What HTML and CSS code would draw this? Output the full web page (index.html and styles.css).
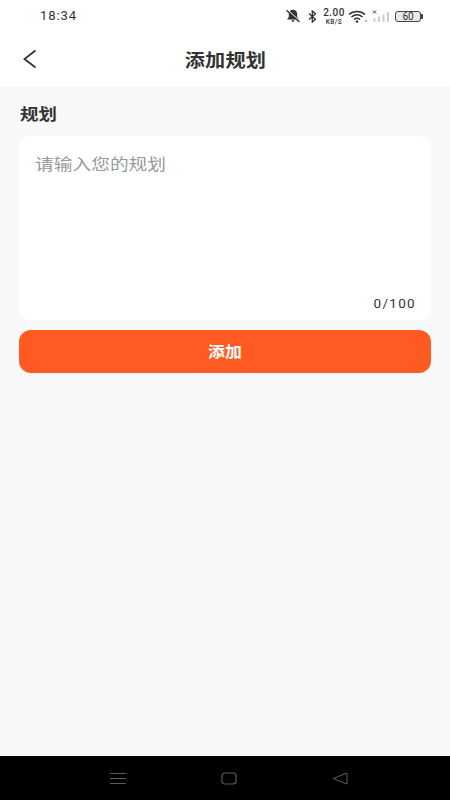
FILE: index.html
```html
<!DOCTYPE html>
<html lang="zh">
<head>
<meta charset="utf-8">
<title>添加规划</title>
<link rel="stylesheet" href="styles.css">
</head>
<body>
<div class="screen">
  <header class="top">
    <div class="status">
      <span class="time">18:34</span>
      <div class="status-icons">
        <svg class="i-bell" width="16" height="14" viewBox="0 0 16 14"><path d="M8 .8c-2.700 0-4.200 1.900-4.200 4.200v3L2 10.500h12L12.200 8V5C12.200 2.700 10.700 .8 8 .8z" fill="#333"/><path d="M6.200 11.200h3.600L8 13.200z" fill="#333"/><path d="M2.800 1.200L14.800 12.200" stroke="#fff" stroke-width="1.200"/><path d="M1.500 1.200L14.500 13" stroke="#333" stroke-width="1.500"/></svg>
        <svg class="i-bt" width="9" height="13" viewBox="0 0 9 13"><path d="M1 3.500L7.500 9.200L4.300 12V1L7.500 3.800L1 9.500" fill="none" stroke="#333" stroke-width="1.300"/></svg>
        <div class="speed"><span>2.00</span><span class="unit">KB/S</span></div>
        <svg class="i-wifi" width="20" height="13" viewBox="0 0 20 13"><path d="M1 4.500C5.500 .5 12.500 .5 17 4.500M3.500 7C6.800 4.200 11.200 4.200 14.500 7M6 9.500C7.800 8 10.200 8 12 9.500" fill="none" stroke="#333" stroke-width="1.600"/><circle cx="9" cy="11.500" r="1.300" fill="#333"/><circle cx="17.800" cy="11" r="1" fill="#999"/></svg>
        <svg class="i-signal" width="17" height="14" viewBox="0 0 17 14"><path d="M1 1.500L4 4.500M4 1.500L1 4.500" stroke="#444" stroke-width="1"/><rect x="1.500" y="9.500" width="2" height="3.500" fill="#ccc"/><rect x="6" y="7.500" width="2" height="5.500" fill="#ccc"/><rect x="10.500" y="5.500" width="2" height="7.500" fill="#ccc"/><rect x="15" y="3" width="2" height="10" fill="#ccc"/></svg>
        <div class="battery"><div class="batt-body">60</div><div class="batt-tip"></div></div>
      </div>
    </div>
    <div class="nav">
      <svg class="back" width="16" height="20" viewBox="0 0 16 20"><path d="M13.500 1.500L2.500 10L13.500 18.500" fill="none" stroke="#333" stroke-width="1.800"/></svg>
      <h1 class="title">添加规划</h1>
    </div>
  </header>
  <main class="content">
    <h2 class="label">规划</h2>
    <div class="card">
      <p class="placeholder">请输入您的规划</p>
      <p class="count">0/100</p>
    </div>
    <button class="submit" type="button"><span class="submit-text">添加</span></button>
  </main>
  <footer class="sysnav">
    <svg width="16" height="13" viewBox="0 0 16 13"><path d="M0 1.500H16M0 6.500H16M0 11.500H16" stroke="#5c5c5c" stroke-width="1"/></svg>
    <svg width="16" height="13" viewBox="0 0 16 13"><rect x="1" y="1" width="14" height="11" rx="3" fill="none" stroke="#5c5c5c" stroke-width="1.200"/></svg>
    <svg width="16" height="13" viewBox="0 0 16 13"><path d="M15 1V12L1 6.500Z" fill="none" stroke="#5c5c5c" stroke-width="1"/></svg>
  </footer>
</div>
</body>
</html>
```
FILE: styles.css
```css
* { box-sizing: border-box; }
html, body { margin: 0; padding: 0; }
body { font-family: "Noto Sans CJK SC", "Noto Sans", sans-serif; }
.screen { width: 450px; height: 800px; display: flex; flex-direction: column; background: #f8f8f8; overflow: hidden; }
.top { background: #fff; height: 87px; flex: none; }
.status { height: 32px; display: flex; align-items: center; justify-content: space-between; padding: 0 27px 0 40px; }
.time { font: 13px/16px Roboto, sans-serif; color: #333; letter-spacing: .9px; }
.status-icons { display: flex; align-items: center; }
.i-bell { margin-right: 7px; }
.i-bt { margin-right: 6px; }
.speed { display: flex; flex-direction: column; align-items: center; width: 22px; margin-right: 3px; color: #333; font: 500 10px/11px Roboto, sans-serif; letter-spacing: .4px; }
.speed .unit { font: 500 6.500px/8px Roboto, sans-serif; letter-spacing: .4px; }
.i-wifi { margin-right: 4px; }
.i-signal { margin-right: 6px; }
.battery { display: flex; align-items: center; }
.batt-body { width: 26px; height: 11px; border: 1px solid #444; border-radius: 3px; background: #e8e8e8; font: 10px/9px Roboto, sans-serif; color: #333; text-align: center; }
.batt-tip { width: 2px; height: 5px; background: #444; border-radius: 0 1px 1px 0; }
.nav { height: 55px; position: relative; display: flex; align-items: center; justify-content: center; }
.back { position: absolute; left: 22px; top: 17px; }
.title { margin: 0; font-size: 18px; line-height: 24px; font-weight: 700; color: #333; letter-spacing: .2px; transform: translateY(-1px) scaleX(1.120); }
.content { flex: 1; padding: 0 19px; }
.label { margin: 16px 0 12px 1px; font-size: 16px; line-height: 21px; font-weight: 700; color: #333; transform: scaleX(1.150); transform-origin: left center; }
.card { height: 184px; background: #fff; border-radius: 12px; padding: 16px 15px 0 16px; display: flex; flex-direction: column; justify-content: space-between; }
.placeholder { margin: 0; font-size: 16px; line-height: 23px; color: #999; transform: scaleX(1.170); transform-origin: left center; }
.count { margin: 0 0 8px; text-align: right; font: 13.500px/17px Roboto, sans-serif; color: #333; letter-spacing: 1.300px; }
.submit { display: block; width: 100%; height: 43px; margin-top: 10px; padding: 0 0 2px; border: 0; border-radius: 12px; background: #ff5a22; color: #fff; font: 700 15px/20px "Noto Sans CJK SC", sans-serif; }
.submit-text { display: inline-block; transform: scaleX(1.130); }
.sysnav { height: 44px; flex: none; background: #000; display: flex; align-items: center; padding: 0 0 0 110px; gap: 95px; }
```
